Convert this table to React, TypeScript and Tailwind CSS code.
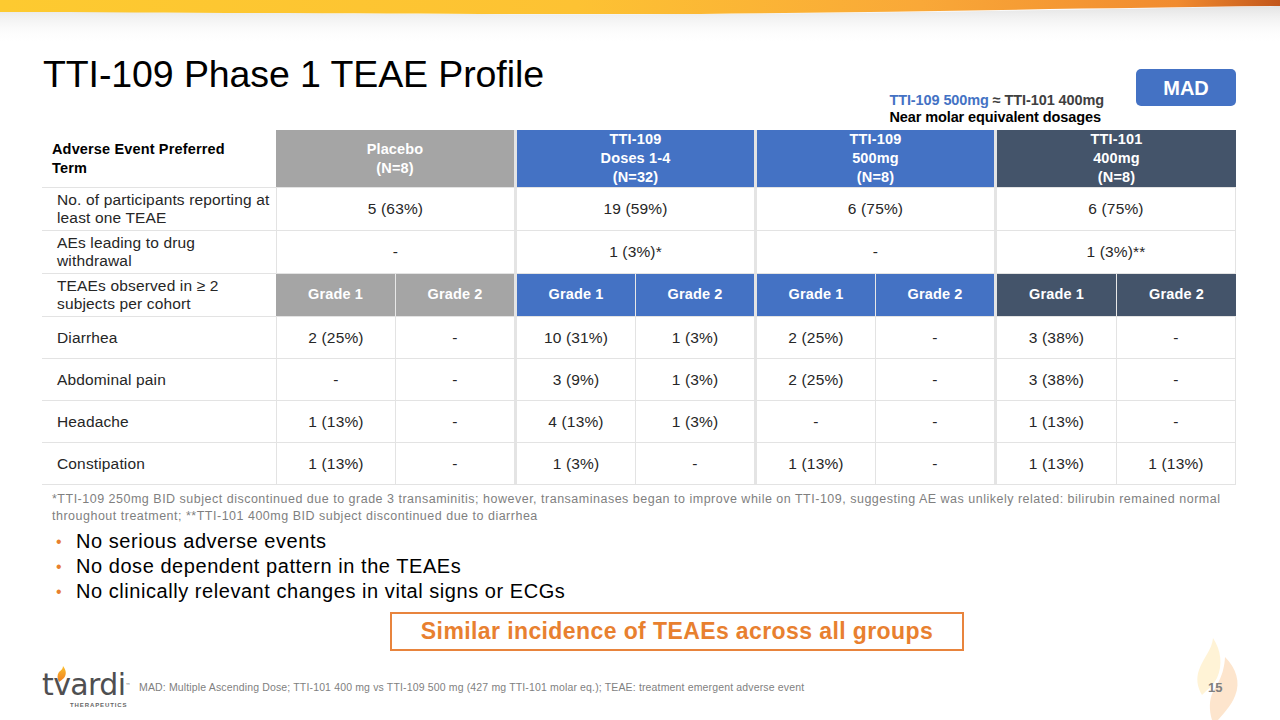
import React from "react";

const groupW = ["w-[238px]", "w-[237px]", "w-[237px]", "w-[239px]"];
const cellW = [
  "w-[119px]",
  "w-[119px]",
  "w-[118px]",
  "w-[119px]",
  "w-[118px]",
  "w-[119px]",
  "w-[119px]",
  "w-[120px]",
];
const hdrBg = ["bg-[#a5a5a5]", "bg-[#4472c4]", "bg-[#4472c4]", "bg-[#44546a]"];

const Sep = () => <div className="w-[3px] shrink-0 bg-[#e4e4e4]" />;

function GroupRow({
  label,
  values,
  h,
}: {
  label: [string, string];
  values: string[];
  h: string;
}) {
  return (
    <div className={`flex ${h} border-b border-[#e3e3e3]`}>
      <div className="w-[234px] shrink-0 pl-[15px] flex flex-col justify-center leading-[18px]">
        <span>{label[0]}</span>
        <span>{label[1]}</span>
      </div>
      {values.map((v, i) => (
        <React.Fragment key={i}>
          {i > 0 && <Sep />}
          <div
            className={`${groupW[i]} shrink-0 flex items-center justify-center ${
              i === 0 ? "border-l border-[#e3e3e3]" : ""
            } ${i === 3 ? "border-r border-[#e3e3e3]" : ""}`}
          >
            {v}
          </div>
        </React.Fragment>
      ))}
    </div>
  );
}

function BodyRow({ label, values }: { label: string; values: string[] }) {
  return (
    <div className="flex h-[42px] border-b border-[#e3e3e3]">
      <div className="w-[234px] shrink-0 pl-[15px] flex items-center">{label}</div>
      {[0, 1, 2, 3].map((g) => (
        <React.Fragment key={g}>
          {g > 0 && <Sep />}
          <div
            className={`${cellW[g * 2]} shrink-0 flex items-center justify-center ${
              g === 0 ? "border-l border-[#e3e3e3]" : ""
            }`}
          >
            {values[g * 2]}
          </div>
          <div
            className={`${cellW[g * 2 + 1]} shrink-0 flex items-center justify-center border-l border-[#e3e3e3] ${
              g === 3 ? "border-r" : ""
            }`}
          >
            {values[g * 2 + 1]}
          </div>
        </React.Fragment>
      ))}
    </div>
  );
}

export default function App() {
  const headers = [
    ["Placebo", "(N=8)"],
    ["TTI-109", "Doses 1-4", "(N=32)"],
    ["TTI-109", "500mg", "(N=8)"],
    ["TTI-101", "400mg", "(N=8)"],
  ];
  const body: [string, string[]][] = [
    ["Diarrhea", ["2 (25%)", "-", "10 (31%)", "1 (3%)", "2 (25%)", "-", "3 (38%)", "-"]],
    ["Abdominal pain", ["-", "-", "3 (9%)", "1 (3%)", "2 (25%)", "-", "3 (38%)", "-"]],
    ["Headache", ["1 (13%)", "-", "4 (13%)", "1 (3%)", "-", "-", "1 (13%)", "-"]],
    ["Constipation", ["1 (13%)", "-", "1 (3%)", "-", "1 (13%)", "-", "1 (13%)", "1 (13%)"]],
  ];

  return (
    <div className="relative w-[1280px] h-[720px] overflow-hidden bg-white font-['Liberation_Sans',Arial,sans-serif] text-[#262626]">
      {/* top decorative bar */}
      <svg width="1280" height="48" viewBox="0 0 1280 48" className="block">
        <defs>
          <linearGradient id="bar" x1="0" x2="1" y1="0" y2="0">
            <stop offset="0" stopColor="#fdca30" />
            <stop offset="0.45" stopColor="#fdc233" />
            <stop offset="0.72" stopColor="#f9a838" />
            <stop offset="0.92" stopColor="#f18b2f" />
            <stop offset="1" stopColor="#c2561b" />
          </linearGradient>
          <linearGradient id="sh" x1="0" y1="0" x2="0" y2="1">
            <stop offset="0" stopColor="#e3e3e3" />
            <stop offset="1" stopColor="#ffffff" stopOpacity="0" />
          </linearGradient>
        </defs>
        <path d="M0 11 C300 13 500 15 700 14 C900 13 1100 9 1280 6 V44 H0 Z" fill="url(#sh)" />
        <path d="M0 0 H1280 V6 C1100 8 900 12 700 14 C500 14.5 300 13 0 12 Z" fill="url(#bar)" />
      </svg>

      {/* title row */}
      <div className="flex h-[82px]">
        <h1 className="ml-[43px] mt-[8px] text-[37.5px] leading-[37px] text-black tracking-[-0.1px]">
          TTI-109 Phase 1 TEAE Profile
        </h1>
        <div className="ml-auto mt-[44px] text-[14.5px] leading-[17px] font-bold tracking-[-0.1px]">
          <div>
            <span className="text-[#4472c4]">TTI-109 500mg</span>
            <span className="text-[#404040]"> ≈ TTI-101 400mg</span>
          </div>
          <div className="text-black">Near molar equivalent dosages</div>
        </div>
        <div className="ml-[32px] mr-[44px] mt-[21px] w-[100px] h-[37px] rounded-[5px] bg-[#4472c4] text-white font-bold text-[20px] flex items-center justify-center">
          MAD
        </div>
      </div>

      {/* table */}
      <div className="ml-[42px] w-[1194px] text-[15.5px] tracking-[0.15px]">
        {/* header */}
        <div className="flex h-[58px] border-b border-[#e3e3e3]">
          <div className="w-[234px] shrink-0 pl-[10px] flex flex-col justify-center font-bold text-[14.5px] leading-[19px] text-black">
            <span>Adverse Event Preferred</span>
            <span>Term</span>
          </div>
          {headers.map((h, i) => (
            <React.Fragment key={i}>
              {i > 0 && <Sep />}
              <div
                className={`${groupW[i]} ${hdrBg[i]} shrink-0 flex flex-col items-center justify-center text-white font-bold text-[14.5px] leading-[19px]`}
              >
                {h.map((t) => (
                  <span key={t}>{t}</span>
                ))}
              </div>
            </React.Fragment>
          ))}
        </div>

        <GroupRow
          h="h-[43px]"
          label={["No. of participants reporting at", "least one TEAE"]}
          values={["5 (63%)", "19 (59%)", "6 (75%)", "6 (75%)"]}
        />
        <GroupRow
          h="h-[43px]"
          label={["AEs leading to drug", "withdrawal"]}
          values={["-", "1 (3%)*", "-", "1 (3%)**"]}
        />

        {/* grade header row */}
        <div className="flex h-[43px] border-b border-[#e3e3e3]">
          <div className="w-[234px] shrink-0 pl-[15px] flex flex-col justify-center leading-[18px]">
            <span>TEAEs observed in ≥ 2</span>
            <span>subjects per cohort</span>
          </div>
          {[0, 1, 2, 3].map((g) => (
            <React.Fragment key={g}>
              {g > 0 && <Sep />}
              <div
                className={`${cellW[g * 2]} ${hdrBg[g]} shrink-0 flex items-center justify-center text-white font-bold text-[14.5px]`}
              >
                Grade 1
              </div>
              <div
                className={`${cellW[g * 2 + 1]} ${hdrBg[g]} shrink-0 flex items-center justify-center text-white font-bold text-[14.5px] border-l border-[#e8e8e8]`}
              >
                Grade 2
              </div>
            </React.Fragment>
          ))}
        </div>

        {body.map(([l, v]) => (
          <BodyRow key={l} label={l} values={v} />
        ))}
      </div>

      {/* footnote */}
      <div className="ml-[52px] mt-[6px] text-[12.5px] leading-[17px] text-[#7f7f7f] tracking-[0.5px] whitespace-nowrap">
        *TTI-109 250mg BID subject discontinued due to grade 3 transaminitis; however, transaminases began to improve
        while on TTI-109, suggesting AE was unlikely related: bilirubin remained normal
        <br />
        throughout treatment; **TTI-101 400mg BID subject discontinued due to diarrhea
      </div>

      {/* bullets */}
      <ul className="ml-[56px] mt-[4px] text-[20px] leading-[25px] text-black tracking-[0.55px]">
        {[
          "No serious adverse events",
          "No dose dependent pattern in the TEAEs",
          "No clinically relevant changes in vital signs or ECGs",
        ].map((t) => (
          <li key={t} className="flex items-center">
            <span className="w-[20px] text-[#e8802f] text-[16px]">•</span>
            <span>{t}</span>
          </li>
        ))}
      </ul>

      {/* callout */}
      <div className="ml-[390px] mt-[8px] w-[574px] h-[39px] border-2 border-[#e8843d] flex items-center justify-center text-[23px] font-bold text-[#e8802f] tracking-[0.4px]">
        Similar incidence of TEAEs across all groups
      </div>

      {/* footer */}
      <div className="flex items-center mt-[15px] h-[44px]">
        <div className="relative ml-[42px] w-[91px] h-[40px]">
          <svg
            className="absolute left-[14px] top-[-2px]"
            width="12"
            height="16"
            viewBox="0 0 12 16"
          >
            <defs>
              <linearGradient id="lf" x1="0" y1="0" x2="0" y2="1">
                <stop offset="0" stopColor="#fbc02d" />
                <stop offset="1" stopColor="#ef7d22" />
              </linearGradient>
            </defs>
            <path d="M7 0 C10 4 11 8 8 12 C6 14 4 15 3 16 C1 12 1 9 3 6 C5 4 7 3 7 0 Z" fill="url(#lf)" />
          </svg>
          <div className="absolute left-0 top-[2px] font-['DejaVu_Sans',sans-serif] text-[30px] leading-[30px] tracking-[-0.6px] text-[#4f4f51]">
            tvardi
            <span className="text-[5px] align-top tracking-normal">™</span>
          </div>
          <div className="absolute left-[28px] top-[34px] text-[6px] leading-[7px] font-bold tracking-[0.9px] text-[#666]">
            THERAPEUTICS
          </div>
        </div>
        <div className="ml-[6px] text-[10.5px] text-[#7f7f7f] tracking-[0.15px]">
          MAD: Multiple Ascending Dose; TTI-101 400 mg vs TTI-109 500 mg (427 mg TTI-101 molar eq.); TEAE: treatment
          emergent adverse event
        </div>
      </div>

      {/* flame watermark + page number */}
      <svg className="absolute left-[1180px] top-[630px]" width="70" height="90" viewBox="0 0 70 90">
        <path d="M33 8 C41 20 43 35 37 48 C33 56 27 60 22 65 C17 57 16 48 19 40 C23 28 32 20 33 8 Z" fill="#fff3d6" />
        <path d="M45 27 C56 38 61 52 55 66 C51 76 43 84 38 90 L32 90 C29 80 29 70 33 62 C37 54 44 46 45 27 Z" fill="#fde5cd" />
      </svg>
      <div className="absolute left-[1208px] top-[678px] text-[13px] font-bold text-[#7f7f7f]">15</div>
    </div>
  );
}
